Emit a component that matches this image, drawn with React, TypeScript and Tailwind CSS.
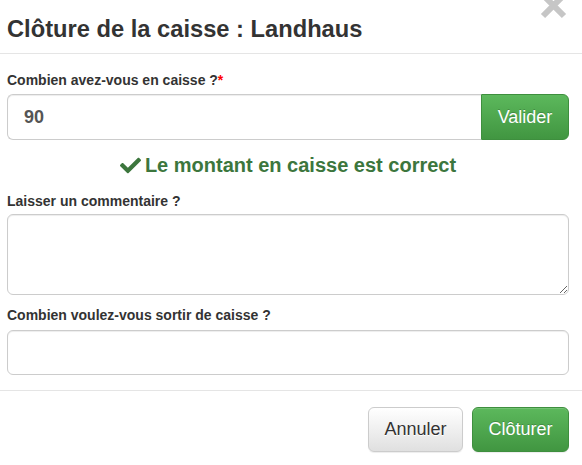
import React, { useState } from 'react';
import { FaCheck } from 'react-icons/fa';

const font = { fontFamily: '"Liberation Sans", Arial, sans-serif' };

const App: React.FC = () => {
  const [amount, setAmount] = useState('90');
  const [comment, setComment] = useState('');
  const [withdraw, setWithdraw] = useState('');

  return (
    <div className="relative w-[582px] h-[465px] overflow-hidden bg-white text-[#333]" style={font}>
      {/* Close button */}
      <button className="absolute left-[540px] top-[-8px] w-[27px] h-[27px]" aria-label="Fermer">
        <svg width="27" height="27" viewBox="0 0 27 27">
          <path d="M3 3 L24 24 M24 3 L3 24" stroke="#c6c6c6" strokeWidth="6" />
        </svg>
      </button>

      {/* Header */}
      <div className="h-[54px] border-b border-[#e5e5e5] pl-[7px] pt-[16px]">
        <h4 className="text-[23.7px] font-bold leading-[27px] text-[#333]">Clôture de la caisse : Landhaus</h4>
      </div>

      {/* Body */}
      <div className="pl-[7px] pr-[13px] pt-[16px] pb-[15px] border-b border-[#e5e5e5]">
        <label className="block text-[14px] font-bold leading-[20px] mb-[4px]">
          Combien avez-vous en caisse ?<span className="text-[#ff0000]">*</span>
        </label>
        <div className="flex h-[46px]">
          <input
            value={amount}
            onChange={(e) => setAmount(e.target.value)}
            className="flex-1 min-w-0 h-full border border-[#ccc] border-r-0 rounded-l-[6px] px-[16px] text-[18px] font-bold text-[#555] shadow-[inset_0_1px_1px_rgba(0,0,0,0.075)] outline-none"
            style={font}
          />
          <button className="w-[88px] h-full rounded-r-[6px] border border-[#3e8f3e] bg-gradient-to-b from-[#5cb85c] to-[#419641] text-white text-[18px] [text-shadow:0_-1px_0_rgba(0,0,0,0.2)]">
            Valider
          </button>
        </div>

        <div className="mt-[11px] flex items-center justify-center gap-[4px] text-[20px] font-bold leading-[28px] text-[#3c763d]">
          <FaCheck size={21} />
          <span>Le montant en caisse est correct</span>
        </div>

        <label className="block mt-[12px] mb-[3px] text-[14px] font-bold leading-[20px]">Laisser un commentaire ?</label>
        <textarea
          value={comment}
          onChange={(e) => setComment(e.target.value)}
          className="block w-full h-[81px] border border-[#ccc] rounded-[6px] px-[12px] py-[6px] text-[14px] shadow-[inset_0_1px_1px_rgba(0,0,0,0.075)] outline-none"
          style={font}
        />

        <label className="block mt-[10px] mb-[5px] text-[14px] font-bold leading-[20px]">Combien voulez-vous sortir de caisse ?</label>
        <input
          value={withdraw}
          onChange={(e) => setWithdraw(e.target.value)}
          className="block w-full h-[45px] border border-[#ccc] rounded-[6px] px-[16px] text-[18px] text-[#555] shadow-[inset_0_1px_1px_rgba(0,0,0,0.075)] outline-none"
          style={font}
        />
      </div>

      {/* Footer */}
      <div className="flex justify-end gap-[9px] pr-[13px] pt-[16px]">
        <button className="w-[95px] h-[45px] rounded-[6px] border border-[#ccc] bg-gradient-to-b from-white to-[#e0e0e0] text-[#333] text-[18px] shadow-[inset_0_1px_0_rgba(255,255,255,0.15),0_1px_1px_rgba(0,0,0,0.075)] [text-shadow:0_1px_0_#fff]">
          Annuler
        </button>
        <button className="w-[97px] h-[45px] rounded-[6px] border border-[#3e8f3e] bg-gradient-to-b from-[#5cb85c] to-[#419641] text-white text-[18px] shadow-[inset_0_1px_0_rgba(255,255,255,0.15),0_1px_1px_rgba(0,0,0,0.075)] [text-shadow:0_-1px_0_rgba(0,0,0,0.2)]">
          Clôturer
        </button>
      </div>
    </div>
  );
};

export default App;
